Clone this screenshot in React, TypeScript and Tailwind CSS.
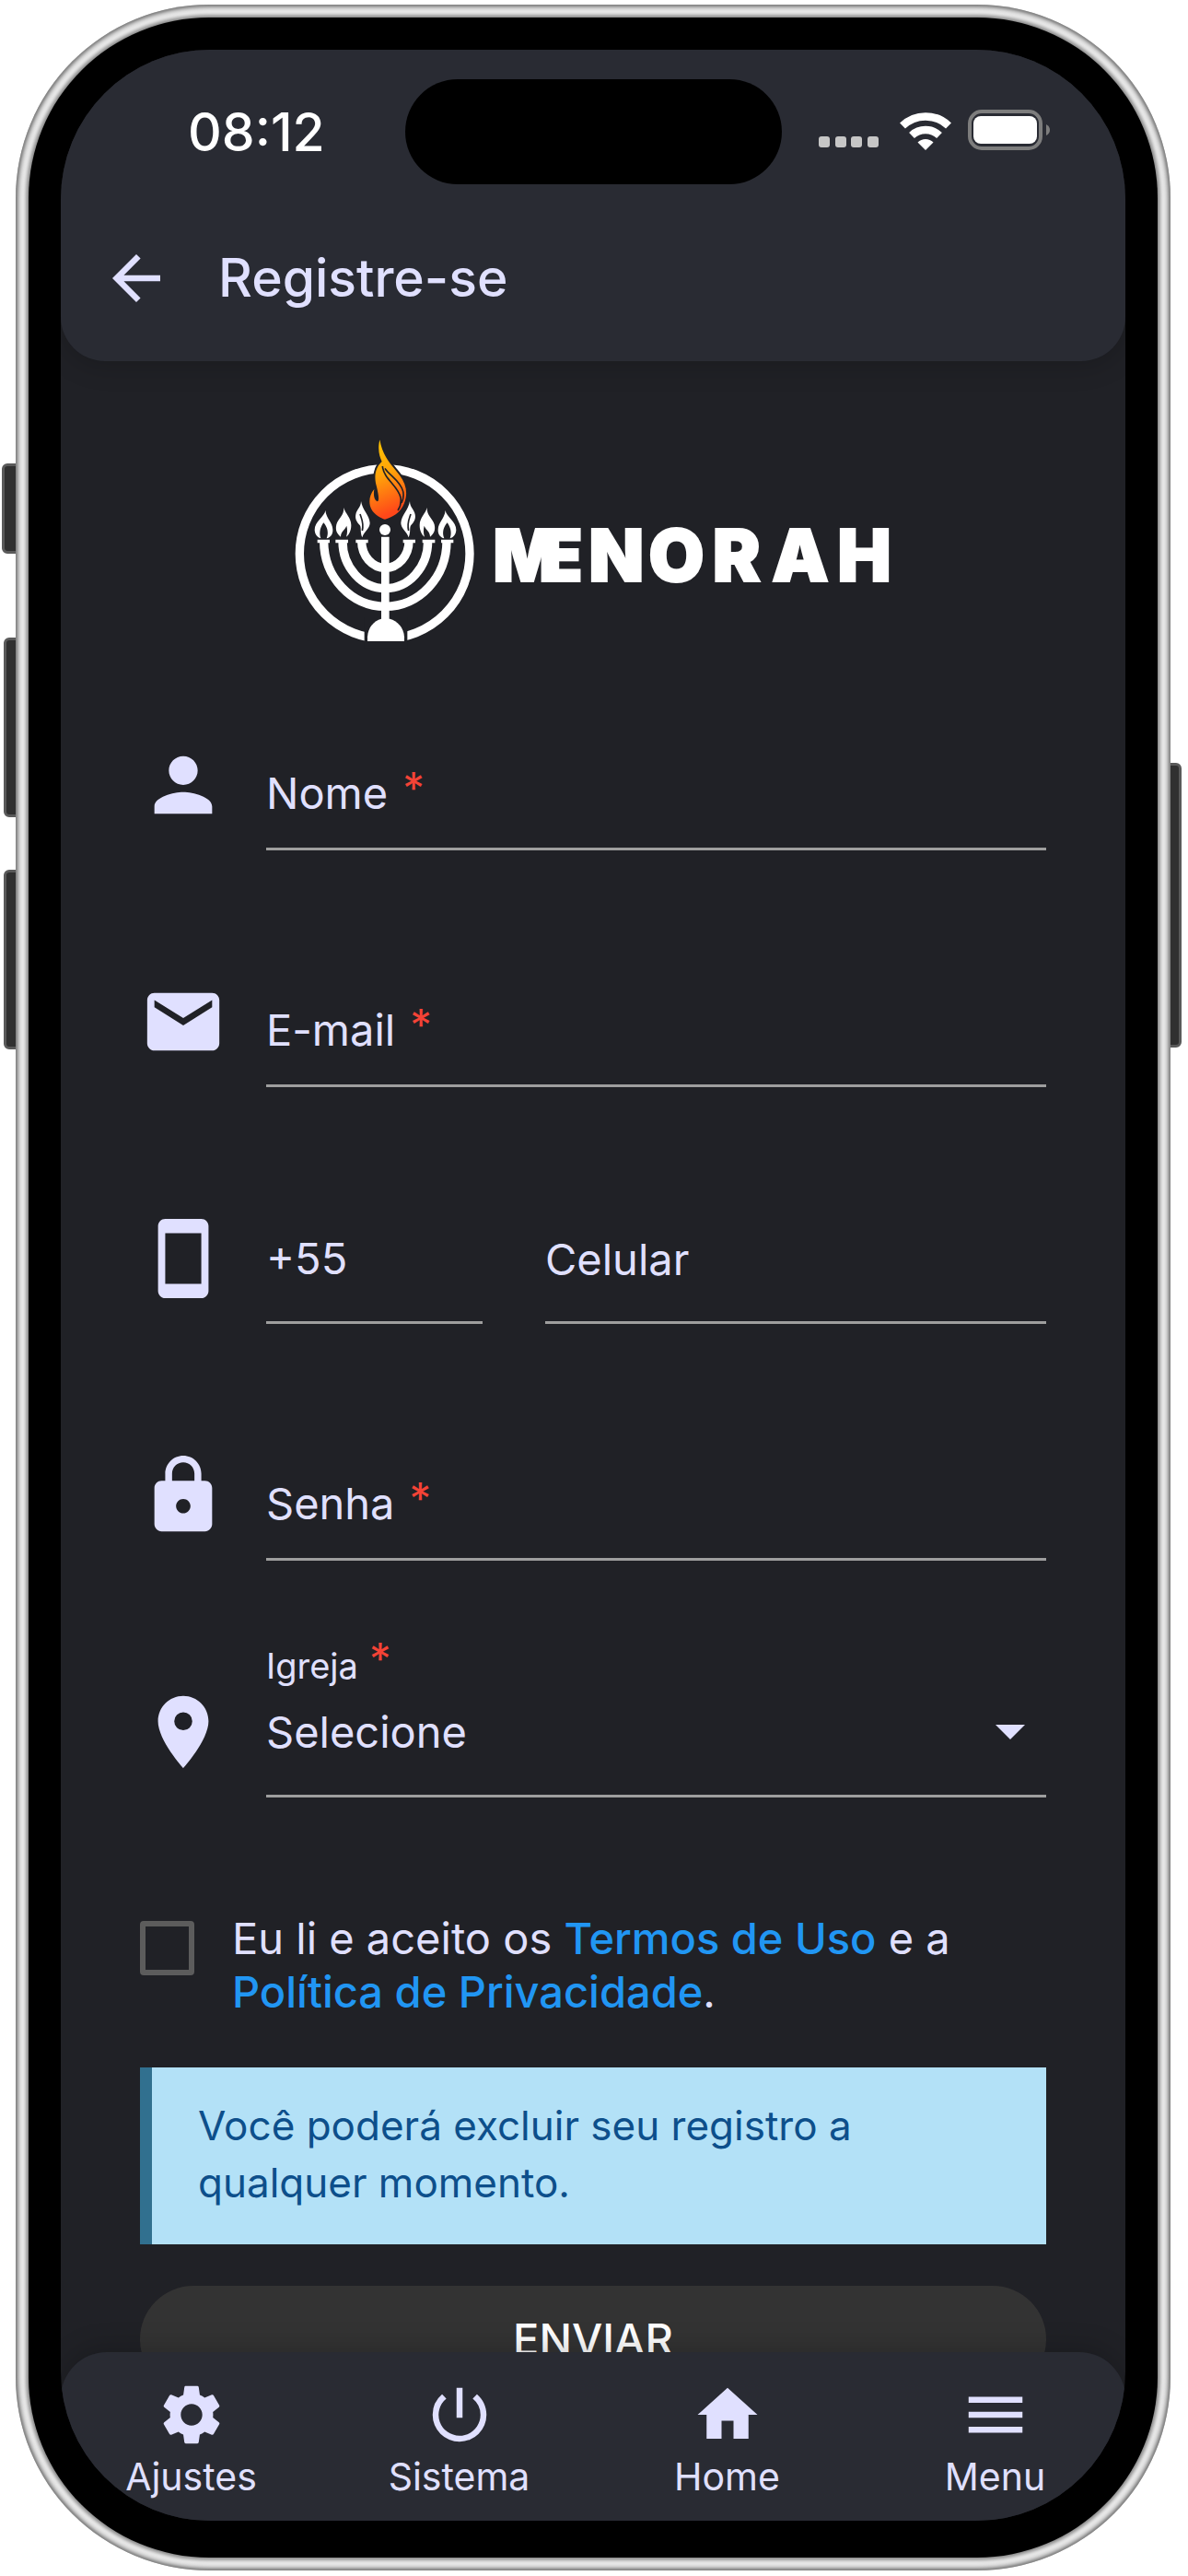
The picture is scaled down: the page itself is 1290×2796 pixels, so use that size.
import React, { useState } from "react";
import {
  MdArrowBack,
  MdEmail,
  MdHome,
  MdLock,
  MdMenu,
  MdPerson,
  MdPlace,
  MdPowerSettingsNew,
  MdSettings,
  MdStayPrimaryPortrait,
} from "react-icons/md";
import type { IconType } from "react-icons";

//-----> Status bar <-----------------------------------------//
const StatusBar = () => (
  <div className="grid h-[178px] grid-cols-[1fr_409px_1fr] items-start pt-8 text-white">
    <div className="pt-[22px] pl-[138px] text-[57px] leading-[72px] font-medium">08:12</div>
    <div className="h-[114px] rounded-full bg-black" />
    <svg viewBox="0 0 290 100" className="mt-1 ml-5 h-[100px] w-[290px]" aria-hidden="true">
      <g fill="#c6c6c6">
        <rect x="20" y="58" width="12" height="12" rx="3" />
        <rect x="38" y="58" width="12" height="12" rx="3" />
        <rect x="55" y="58" width="12" height="12" rx="3" />
        <rect x="73" y="58" width="12" height="12" rx="3" />
      </g>
      <g fill="none" stroke="#fff" strokeWidth="8.5">
        <path d="M111 46.5a36 36 0 0 1 50 0" />
        <path d="M121 57a22 22 0 0 1 30 0" />
      </g>
      <path d="M136 73l-8.500-8.500a12 12 0 0 1 17 0z" fill="#fff" />
      <rect x="184" y="31" width="77" height="40" rx="13" fill="none" stroke="#7d7d7d" strokeWidth="4" />
      <rect x="188" y="36" width="69" height="30" rx="8" fill="#fff" />
      <path d="M267 45q4 2 4 6t-4 6z" fill="#7d7d7d" />
    </svg>
  </div>
);

//-----> Logo <-----------------------------------------------//
const SideFlames = () => (
  <g>
    <path d="M118 252C116 272 82 288 83 316C84 331 92 340 103 343C96 325 102 305 112 292C124 305 130 325 122 343C134 340 143 330 142 314C141 290 122 282 118 252Z" />
    <path d="M178 243C182 262 202 275 202 300C202 318 195 332 186 338C190 326 190 314 187 302C182 316 168 320 168 338C154 328 150 314 154 298C159 278 179 270 178 243Z" />
    <path d="M234 222C238 250 262 268 263 293C262 312 244 320 238 340C230 322 236 308 230 300C220 290 214 280 217 265C220 248 234 242 234 222Z" />
    <path d="M231 264C236 280 244 292 238 318" fill="none" stroke="#202126" strokeWidth="5" />
  </g>
);

const flame =
  "M295 22C287 55 295 78 302 93C275 118 278 150 285 175C292 205 294 222 287 223C276 218 274 202 277 183C260 203 258 228 268 248C278 266 298 277 312 281C335 274 362 262 375 228C388 195 380 165 360 138C335 104 305 80 295 22Z";

const Logo = () => (
  <svg viewBox="0 0 1980 705" className="mx-auto h-[235px] w-[660px]" role="img" aria-label="Menorah">
    <defs>
      <linearGradient id="fire" x1="0" y1="0" x2="0.2" y2="1">
        <stop offset="0" stopColor="#ffc800" />
        <stop offset="0.5" stopColor="#ffa20a" />
        <stop offset="1" stopColor="#ff4719" />
      </linearGradient>
    </defs>
    <circle cx="311" cy="393" r="277" fill="none" stroke="#fff" strokeWidth="28" />
    <path d="M245 600h140v100h-140z" fill="#202126" />
    <g fill="none" stroke="#fff" strokeWidth="28">
      <path d="M113 352A200 213 0 0 0 513 352" />
      <path d="M174 352A139 154 0 0 0 452 352" />
      <path d="M236 352A77 87 0 0 0 390 352" />
    </g>
    <g fill="#fff">
      <path d="M92 347h40v11h-40zM151 347h41v11h-41zM217 347h40v11h-40zM371 347h40v11h-40zM434 347h41v11h-41zM495 347h40v11h-40z" />
      <path d="M300 338h26v270h-26z" />
      <circle cx="312" cy="315" r="18" />
      <path d="M255 678v-14C257 632 276 612 300 605h28C352 612 373 632 375 664v14z" />
      <SideFlames />
      <g transform="translate(627 0) scale(-1 1)">
        <SideFlames />
      </g>
    </g>
    <path d={flame} fill="url(#fire)" stroke="#202126" strokeWidth="12" paintOrder="stroke" />
    <g fill="none" stroke="#202126" strokeWidth="5">
      <path d="M304 108C308 150 355 172 363 210C366 230 361 242 354 252" />
      <path d="M312 115C326 138 362 155 371 190C374 205 371 218 366 228" />
    </g>
    <text
      x="664 813 976 1171 1379 1572 1786"
      y="484"
      fill="#fff"
      stroke="#fff"
      strokeWidth="6"
      fontSize="234"
      fontWeight="900"
      fontFamily="Inter, sans-serif"
    >
      MENORAH
    </text>
  </svg>
);

//-----> Form <-----------------------------------------------//
type RowProps = {
  icon: IconType;
  children: React.ReactNode;
};

const Row = ({ icon: Icon, children }: RowProps) => (
  <div className="flex h-[180px] items-end gap-[43px]">
    <Icon className="mb-6 size-[94px] shrink-0" aria-hidden="true" />
    {children}
  </div>
);

type FieldProps = {
  id: string;
  label: string;
  type?: string;
  icon: IconType;
};

const Field = ({ id, label, type = "text", icon }: FieldProps) => (
  <Row icon={icon}>
    <div className="relative flex-1 border-b-3 border-[#9e9e9e] pb-[31px]">
      <label htmlFor={id} className="flex items-start gap-4">
        {label}
        <span className="leading-[44px] text-[#f44336]">*</span>
      </label>
      <input id={id} type={type} className="absolute inset-0 w-full bg-transparent outline-none" />
    </div>
  </Row>
);

const RegisterForm = () => {
  const [ddi, setDdi] = useState("+55");

  return (
    <form className="px-[86px] pt-[38px] text-[47px] leading-[56px]">
      <div className="flex flex-col gap-[77px]">
        <Field id="nome" label="Nome" icon={MdPerson} />
        <Field id="email" label="E-mail" type="email" icon={MdEmail} />
        <Row icon={MdStayPrimaryPortrait}>
          <div className="flex min-w-0 flex-1 gap-[68px]">
            <input
              aria-label="DDI"
              value={ddi}
              onChange={(e) => setDdi(e.target.value)}
              className="w-[235px] border-b-3 border-[#9e9e9e] pb-10 outline-none"
            />
            <input
              aria-label="Celular"
              type="tel"
              placeholder="Celular"
              className="min-w-0 flex-1 border-b-3 border-[#9e9e9e] pb-[38px] outline-none placeholder:text-[#e0e0ff]"
            />
          </div>
        </Row>
        <Field id="senha" label="Senha" type="password" icon={MdLock} />
        <Row icon={MdPlace}>
          <div className="flex-1 border-b-3 border-[#9e9e9e]">
            <label htmlFor="igreja" className="flex items-start gap-3 pb-[22px] text-[38px] leading-[44px]">
              Igreja
              <span className="text-[47px] leading-[28px] text-[#f44336]">*</span>
            </label>
            <div className="relative">
              <select id="igreja" className="block w-full appearance-none bg-transparent pb-10 outline-none">
                <option>Selecione</option>
              </select>
              <svg
                viewBox="0 0 32 16"
                className="pointer-events-none absolute top-5 right-[23px] h-4 w-8"
                aria-hidden="true"
              >
                <path d="M0 0h32L16 16z" fill="currentColor" />
              </svg>
            </div>
          </div>
        </Row>
      </div>

      <div className="mt-[124px] flex items-start gap-[41px]">
        <input
          id="termos"
          type="checkbox"
          className="mt-2.5 size-[59px] shrink-0 appearance-none rounded border-6 border-[#5c5c5c] checked:bg-[#2196f3]"
        />
        <p className="leading-[58px]">
          <label htmlFor="termos">Eu li e aceito os </label>
          <a href="#termos-de-uso" className="font-medium text-[#2196f3]">
            Termos de Uso
          </a>{" "}
          e a{" "}
          <a href="#privacidade" className="font-medium text-[#2196f3]">
            Política de Privacidade
          </a>
          .
        </p>
      </div>

      <div className="mt-[53px] border-l-[13px] border-[#31708f] bg-[#b3e1f7] pt-8 pr-16 pb-9 pl-[50px] text-[44px] leading-[62px] text-[#0d4f8b]">
        Você poderá excluir seu registro a qualquer momento.
      </div>

      <button type="submit" className="mt-[45px] h-[116px] w-full rounded-full bg-[#333] text-[47px] font-medium text-white">
        ENVIAR
      </button>
    </form>
  );
};

//-----> Bottom navigation <----------------------------------//
const tabs: { label: string; icon: IconType }[] = [
  { label: "Ajustes", icon: MdSettings },
  { label: "Sistema", icon: MdPowerSettingsNew },
  { label: "Home", icon: MdHome },
  { label: "Menu", icon: MdMenu },
];

const BottomNav = () => (
  <nav className="z-10 h-[183px] shrink-0 rounded-t-[50px] bg-[#292b33] pt-[29px] shadow-[0_-4px_30px_rgba(0,0,0,0.2)]">
    <div className="-mx-1 grid grid-cols-4">
      {tabs.map(({ label, icon: Icon }) => (
        <button key={label} type="button" className="flex flex-col items-center text-[41px] leading-[56px]">
          <Icon className="size-[78px]" aria-hidden="true" />
          {label}
        </button>
      ))}
    </div>
  </nav>
);

//-----> Phone frame <----------------------------------------//
const sideButton = "absolute w-5 border-[3px] border-[#5a5a5a] bg-[#303030]";

const App = () => (
  <div className="h-screen bg-white pt-[5px] pr-[19px] pb-[6px] pl-[17px] font-[Inter,sans-serif] text-[#e0e0ff]">
    <div className="relative h-full">
      <div className={`${sideButton} top-[498px] -left-[15px] h-[98px] rounded-l-md`} />
      <div className={`${sideButton} top-[687px] -left-[13px] h-[195px] rounded-l-md`} />
      <div className={`${sideButton} top-[939px] -left-[13px] h-[195px] rounded-l-md`} />
      <div className={`${sideButton} top-[823px] -right-[12px] h-[309px] rounded-r-md`} />

      <div className="relative h-full rounded-[210px] bg-white p-[14px] shadow-[inset_0_0_3px_2px_#808080,inset_0_0_8px_4px_#a0a0a0]">
        <div className="h-full rounded-[196px] bg-black px-[35px] pt-[35px] pb-[40px] shadow-[0_0_4px_3px_#858585]">
          <div className="flex h-full flex-col overflow-hidden rounded-[162px] bg-[#202126]">
            <header className="z-10 h-[338px] shrink-0 rounded-b-[48px] bg-[#292b33] shadow-[0_4px_30px_rgba(0,0,0,0.2)]">
              <StatusBar />
              <div className="flex items-center gap-[50px] pt-[31px] pl-[43px]">
                <button type="button" aria-label="Voltar">
                  <MdArrowBack className="size-[78px]" />
                </button>
                <h1 className="text-[57px] leading-[72px] font-medium">Registre-se</h1>
              </div>
            </header>
            <main className="min-h-0 flex-1 overflow-hidden pt-[78px]">
              <Logo />
              <RegisterForm />
            </main>
            <BottomNav />
          </div>
        </div>
      </div>
    </div>
  </div>
);

export default App;
